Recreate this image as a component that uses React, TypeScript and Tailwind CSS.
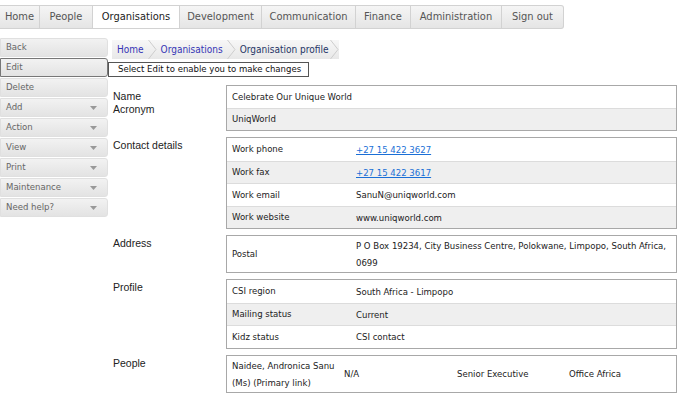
import { ReactNode } from "react";

const tabs = [
  { label: "Home", w: "w-[40px]" },
  { label: "People", w: "w-[53px]" },
  { label: "Organisations", w: "w-[87px]" },
  { label: "Development", w: "w-[82px]" },
  { label: "Communication", w: "w-[94px]" },
  { label: "Finance", w: "w-[55px]" },
  { label: "Administration", w: "w-[91px]" },
  { label: "Sign out", w: "w-[61px]" },
];

const sideButtons: { label: string; menu?: boolean; active?: boolean }[] = [
  { label: "Back" },
  { label: "Edit", active: true },
  { label: "Delete" },
  { label: "Add", menu: true },
  { label: "Action", menu: true },
  { label: "View", menu: true },
  { label: "Print", menu: true },
  { label: "Maintenance", menu: true },
  { label: "Need help?", menu: true },
];

const Section = ({ label, children }: { label: ReactNode; children: ReactNode }) => (
  <div className="flex">
    <div className="w-[118px] shrink-0 pl-[5px] pt-[2px] font-['Liberation_Sans',Arial,sans-serif] text-[10.5px] leading-[13px] text-[#222]">
      {label}
    </div>
    <div className="w-[451px] border border-[#a8a8a8] bg-white">{children}</div>
  </div>
);

const Row = ({ label, value, gray, tall }: { label: string; value: ReactNode; gray?: boolean; tall?: boolean }) => (
  <div
    className={`flex items-center border-t border-[#dcdcdc] first:border-t-0 ${gray ? "bg-[#efefef]" : "bg-white"} ${tall ? "h-[36px]" : "h-[22.5px]"}`}
  >
    <div className="w-[129px] shrink-0 pl-[5px]">{label}</div>
    <div className="flex-1 leading-[17px]">{value}</div>
  </div>
);

const Chevron = () => (
  <svg width="9" height="19" viewBox="0 0 9 19" className="shrink-0">
    <path d="M0.5 0 L8 9.5 L0.5 19" fill="none" stroke="#cdcdcd" strokeWidth="1" />
  </svg>
);

export default function App() {
  return (
    <div className="h-[413px] w-[684px] overflow-hidden bg-white font-['DejaVu_Sans_Condensed','Liberation_Sans',sans-serif] text-[9.5px] text-[#222]">
      {/* top nav */}
      <div className="pt-[5px]">
        <div className="flex h-[24px] w-[564px] overflow-hidden rounded-r-[3px] border border-l-0 border-[#d2d2d2] bg-gradient-to-b from-[#f5f5f5] to-[#e5e5e5]">
          {tabs.map((t) => (
            <div
              key={t.label}
              className={`flex shrink-0 items-center justify-center border-r border-[#d2d2d2] text-[11px] last:border-r-0 ${t.w} ${
                t.label === "Organisations" ? "bg-white text-[#222]" : "text-[#555]"
              }`}
            >
              {t.label}
            </div>
          ))}
        </div>
      </div>

      <div className="mt-[9px] flex">
        {/* sidebar */}
        <div className="flex w-[108px] shrink-0 flex-col gap-[1px]">
          {sideButtons.map((b) => (
            <div
              key={b.label}
              className={`flex h-[19px] items-center justify-between rounded-r-[3px] bg-gradient-to-b from-[#f2f2f2] to-[#e3e3e3] pl-[5px] pr-[10px] text-[9.5px] text-[#666] ${
                b.active ? "border border-[#777]" : "border border-[#e0e0e0]"
              }`}
            >
              <span>{b.label}</span>
              {b.menu && (
                <svg width="7" height="4" viewBox="0 0 7 4">
                  <path d="M0 0 L7 0 L3.5 4 Z" fill="#999" />
                </svg>
              )}
            </div>
          ))}
        </div>

        {/* main */}
        <div className="flex flex-col">
          <div className="ml-[4px] mt-[2px] flex h-[19px] items-center self-start whitespace-nowrap bg-gradient-to-b from-[#f7f7f7] to-[#e8e8e8] pl-[5px] text-[10px]">
            <span className="text-[#3535b5]">Home</span>
            <span className="ml-[4px]"><Chevron /></span>
            <span className="ml-[4px] text-[#3535b5]">Organisations</span>
            <span className="ml-[4px]"><Chevron /></span>
            <span className="ml-[4px] text-[#1f3566]">Organisation profile</span>
            <span className="ml-[2px]"><Chevron /></span>
          </div>
          <div className="mt-[3px] flex h-[15px] w-[201px] items-center whitespace-nowrap border border-[#555] bg-white pl-[9px] text-[9.5px] text-[#111]">
            Select Edit to enable you to make changes
          </div>

          <div className="mt-[8px] flex flex-col gap-[6px]">
            <Section
              label={
                <div className="pt-[3px]">
                  Name
                  <br />
                  Acronym
                </div>
              }
            >
              <div className="flex h-[22px] items-center pl-[5px]">Celebrate Our Unique World</div>
              <div className="flex h-[22px] items-center border-t border-[#dcdcdc] bg-[#efefef] pl-[5px]">UniqWorld</div>
            </Section>

            <Section label="Contact details">
              <Row label="Work phone" value={<a className="text-[#1a6fd6] underline">+27 15 422 3627</a>} />
              <Row label="Work fax" gray value={<a className="text-[#1a6fd6] underline">+27 15 422 3617</a>} />
              <Row label="Work email" value="SanuN@uniqworld.com" />
              <Row label="Work website" gray value="www.uniqworld.com" />
            </Section>

            <Section label="Address">
              <Row
                label="Postal"
                tall
                value={
                  <div className="whitespace-nowrap">
                    P O Box 19234, City Business Centre, Polokwane, Limpopo, South Africa,
                    <br />
                    0699
                  </div>
                }
              />
            </Section>

            <Section label="Profile">
              <Row label="CSI region" value="South Africa - Limpopo" />
              <Row label="Mailing status" gray value="Current" />
              <Row label="Kidz status" value="CSI contact" />
            </Section>

            <Section label="People">
              <div className="flex h-[36px] items-center leading-[17px]">
                <div className="w-[112px] shrink-0 whitespace-nowrap pl-[5px]">
                  Naidee, Andronica Sanu
                  <br />
                  (Ms) (Primary link)
                </div>
                <div className="w-[113px] shrink-0 pl-[5px]">N/A</div>
                <div className="w-[112px] shrink-0 pl-[5px]">Senior Executive</div>
                <div className="pl-[5px]">Office Africa</div>
              </div>
            </Section>
          </div>
        </div>
      </div>
    </div>
  );
}
